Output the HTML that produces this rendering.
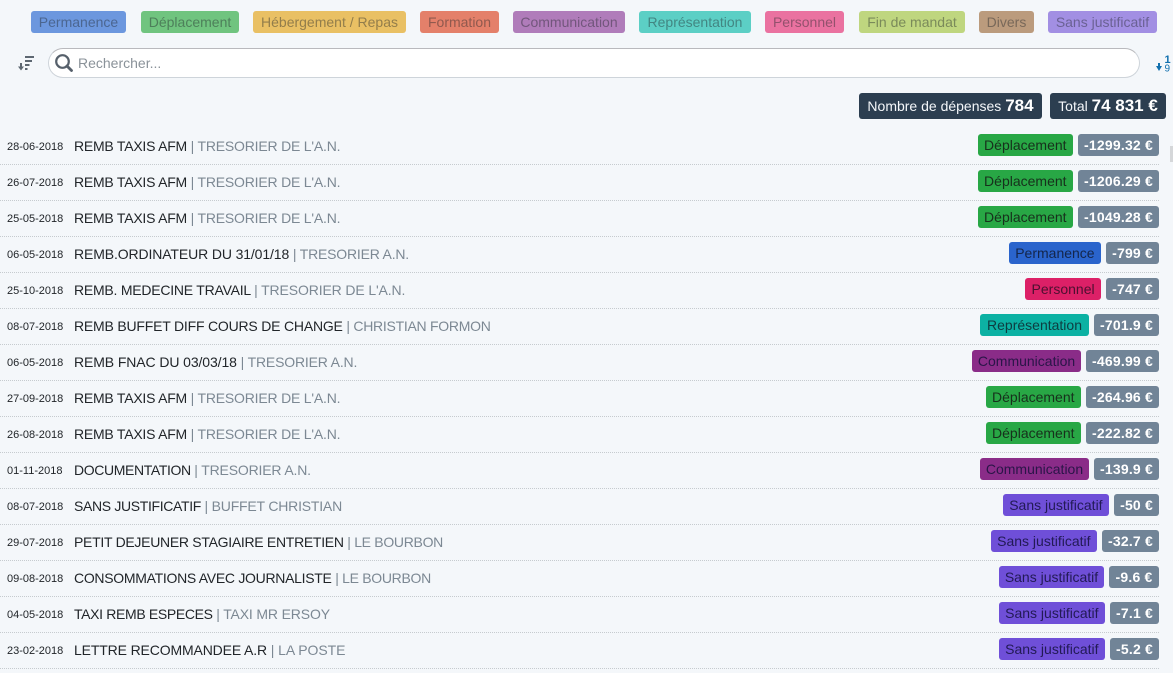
<!DOCTYPE html>
<html lang="fr"><head><meta charset="utf-8"><title>Dépenses</title>
<style>
html,body{margin:0;padding:0}
body{width:1173px;height:673px;overflow:hidden;background:#f4f7fa;position:relative;font-family:"Liberation Sans",Arial,sans-serif;color:#212529}
.f{position:absolute;top:11px;height:22px;line-height:22px;border-radius:3px;font-size:14px;text-align:center;white-space:nowrap;color:rgba(33,37,41,.43)}
.search{position:absolute;left:48px;top:48px;width:1092px;height:30px;box-sizing:border-box;background:#fff;border:1px solid #ced4da;border-top-color:#b9b9bd;border-radius:15px;font-size:14px;line-height:29px;color:#8a9299;padding-left:29px}
.st{position:absolute;top:93px;height:26px;line-height:26px;background:#2c3e50;color:#f4f7fa;border-radius:3px;font-size:14px;text-align:center;white-space:nowrap}
.st b{font-size:17px;color:#fff}
.row{position:absolute;left:0;width:1159px;height:36px}
.sep{position:absolute;left:0;top:34px;width:1159px;border-bottom:1px dotted #c6cbcf}
.d{position:absolute;left:7px;top:8px;font-size:11px;line-height:18px}
.t{position:absolute;left:74px;top:6px;font-size:14px;line-height:20px;white-space:nowrap;letter-spacing:-.23px}
.t span{color:#7c8893;letter-spacing:-.2px}
.bx{position:absolute;right:0;top:4px;display:flex;gap:5px}
.c,.a{height:22px;line-height:22px;border-radius:3px;font-size:14px;white-space:nowrap;box-sizing:border-box}
.c{padding:0 6.5px;text-align:center}
.a{background:#718497;color:#fff;font-weight:bold;padding:0 6px;letter-spacing:.2px;text-align:center}
.dep{background:#28a745;color:#17301c}.per{background:#2a64cc;color:#14264a}.pers{background:#dc2067;color:#4d1030}.rep{background:#0cb1a3;color:#0e3c40}.com{background:#8a2c88;color:#2a1548}.sj{background:#6f4fd8;color:#221a55}
.scroll{position:absolute;left:1170px;top:146px;width:3px;height:16px;background:#d5d7d9}
svg{position:absolute}
</style></head><body>
<div class="f" style="left:31px;width:95px;background:#6c97de">Permanence</div>
<div class="f" style="left:141px;width:98px;background:#70c47f">Déplacement</div>
<div class="f" style="left:253px;width:153px;background:#e9c064">Hébergement / Repas</div>
<div class="f" style="left:420px;width:79px;background:#e4806a">Formation</div>
<div class="f" style="left:513px;width:112px;background:#b07cba">Communication</div>
<div class="f" style="left:639px;width:112px;background:#5ccfc5">Représentation</div>
<div class="f" style="left:765px;width:79px;background:#ea72a0">Personnel</div>
<div class="f" style="left:859px;width:106px;background:#bfd67f">Fin de mandat</div>
<div class="f" style="left:979px;width:55px;background:#bb9b7d">Divers</div>
<div class="f" style="left:1048px;width:109px;background:#a28fe3">Sans justificatif</div>

<svg style="left:17px;top:55px" width="18" height="16" viewBox="0 0 18 16"><g fill="#5d6771"><rect x="8" y="1" width="9" height="2"/><rect x="8" y="5" width="7" height="2"/><rect x="8" y="9" width="4.500" height="2"/><rect x="8" y="13" width="2.500" height="2"/><rect x="3" y="8" width="2" height="5"/><path d="M1 11.500h6L4 15.500z"/></g></svg>
<div class="search">Rechercher...</div>
<svg style="left:54px;top:53px" width="20" height="20" viewBox="0 0 20 20"><circle cx="8.500" cy="8.500" r="6.300" fill="none" stroke="#56606b" stroke-width="2.200"/><path d="M13 13l4.500 4.500" stroke="#56606b" stroke-width="2.800" stroke-linecap="round"/></svg>
<svg style="left:1155px;top:54px" width="18" height="18" viewBox="0 0 18 18"><rect x="3" y="9" width="2" height="5" fill="#1170ae"/><path d="M1 12h6l-3 5z" fill="#1170ae"/><text x="9.500" y="9" font-family="Liberation Sans" font-size="11" font-weight="bold" fill="#1170ae">1</text><text x="9.500" y="17.500" font-family="Liberation Sans" font-size="10" fill="#1170ae">9</text></svg>

<div class="st" style="left:859px;width:183px">Nombre de dépenses <b>784</b></div>
<div class="st" style="left:1050px;width:116px">Total <b>74 831 €</b></div>
<div class="scroll"></div>

<div class="row" style="top:130px"><div class="d">28-06-2018</div><div class="t">REMB TAXIS AFM <span>| TRESORIER DE L'A.N.</span></div><div class="bx"><div class="c dep">Déplacement</div><div class="a">-1299.32 €</div></div><div class="sep"></div></div>
<div class="row" style="top:166px"><div class="d">26-07-2018</div><div class="t">REMB TAXIS AFM <span>| TRESORIER DE L'A.N.</span></div><div class="bx"><div class="c dep">Déplacement</div><div class="a">-1206.29 €</div></div><div class="sep"></div></div>
<div class="row" style="top:202px"><div class="d">25-05-2018</div><div class="t">REMB TAXIS AFM <span>| TRESORIER DE L'A.N.</span></div><div class="bx"><div class="c dep">Déplacement</div><div class="a">-1049.28 €</div></div><div class="sep"></div></div>
<div class="row" style="top:238px"><div class="d">06-05-2018</div><div class="t" style="letter-spacing:-.12px">REMB.ORDINATEUR DU 31/01/18 <span>| TRESORIER A.N.</span></div><div class="bx"><div class="c per">Permanence</div><div class="a">-799 €</div></div><div class="sep"></div></div>
<div class="row" style="top:274px"><div class="d">25-10-2018</div><div class="t">REMB. MEDECINE TRAVAIL <span style="letter-spacing:-.13px">| TRESORIER DE L'A.N.</span></div><div class="bx"><div class="c pers">Personnel</div><div class="a">-747 €</div></div><div class="sep"></div></div>
<div class="row" style="top:310px"><div class="d">08-07-2018</div><div class="t" style="letter-spacing:-.2px">REMB BUFFET DIFF COURS DE CHANGE <span style="letter-spacing:-.27px">| CHRISTIAN FORMON</span></div><div class="bx"><div class="c rep" style="width:109px;padding:0">Représentation</div><div class="a">-701.9 €</div></div><div class="sep"></div></div>
<div class="row" style="top:346px"><div class="d">06-05-2018</div><div class="t" style="letter-spacing:-.1px">REMB FNAC DU 03/03/18 <span style="letter-spacing:-.17px">| TRESORIER A.N.</span></div><div class="bx"><div class="c com" style="width:109px;padding:0">Communication</div><div class="a">-469.99 €</div></div><div class="sep"></div></div>
<div class="row" style="top:382px"><div class="d">27-09-2018</div><div class="t">REMB TAXIS AFM <span>| TRESORIER DE L'A.N.</span></div><div class="bx"><div class="c dep">Déplacement</div><div class="a">-264.96 €</div></div><div class="sep"></div></div>
<div class="row" style="top:418px"><div class="d">26-08-2018</div><div class="t">REMB TAXIS AFM <span>| TRESORIER DE L'A.N.</span></div><div class="bx"><div class="c dep">Déplacement</div><div class="a">-222.82 €</div></div><div class="sep"></div></div>
<div class="row" style="top:454px"><div class="d">01-11-2018</div><div class="t" style="letter-spacing:-.37px">DOCUMENTATION <span style="letter-spacing:-.17px">| TRESORIER A.N.</span></div><div class="bx"><div class="c com" style="width:109px;padding:0">Communication</div><div class="a" style="width:65px;padding:0">-139.9 €</div></div><div class="sep"></div></div>
<div class="row" style="top:490px"><div class="d">08-07-2018</div><div class="t" style="letter-spacing:-.34px">SANS JUSTIFICATIF <span>| BUFFET CHRISTIAN</span></div><div class="bx"><div class="c sj">Sans justificatif</div><div class="a">-50 €</div></div><div class="sep"></div></div>
<div class="row" style="top:526px"><div class="d">29-07-2018</div><div class="t" style="letter-spacing:-.29px">PETIT DEJEUNER STAGIAIRE ENTRETIEN <span style="letter-spacing:-.3px">| LE BOURBON</span></div><div class="bx"><div class="c sj">Sans justificatif</div><div class="a">-32.7 €</div></div><div class="sep"></div></div>
<div class="row" style="top:562px"><div class="d">09-08-2018</div><div class="t" style="letter-spacing:-.29px">CONSOMMATIONS AVEC JOURNALISTE <span style="letter-spacing:-.3px">| LE BOURBON</span></div><div class="bx"><div class="c sj" style="width:105px;padding:0">Sans justificatif</div><div class="a" style="width:50px;padding:0">-9.6 €</div></div><div class="sep"></div></div>
<div class="row" style="top:598px"><div class="d">04-05-2018</div><div class="t" style="letter-spacing:-.34px">TAXI REMB ESPECES <span style="letter-spacing:-.15px">| TAXI MR ERSOY</span></div><div class="bx"><div class="c sj">Sans justificatif</div><div class="a">-7.1 €</div></div><div class="sep"></div></div>
<div class="row" style="top:634px"><div class="d">23-02-2018</div><div class="t" style="letter-spacing:-.14px">LETTRE RECOMMANDEE A.R <span style="letter-spacing:-.05px">| LA POSTE</span></div><div class="bx"><div class="c sj">Sans justificatif</div><div class="a">-5.2 €</div></div><div class="sep"></div></div>
</body></html>
